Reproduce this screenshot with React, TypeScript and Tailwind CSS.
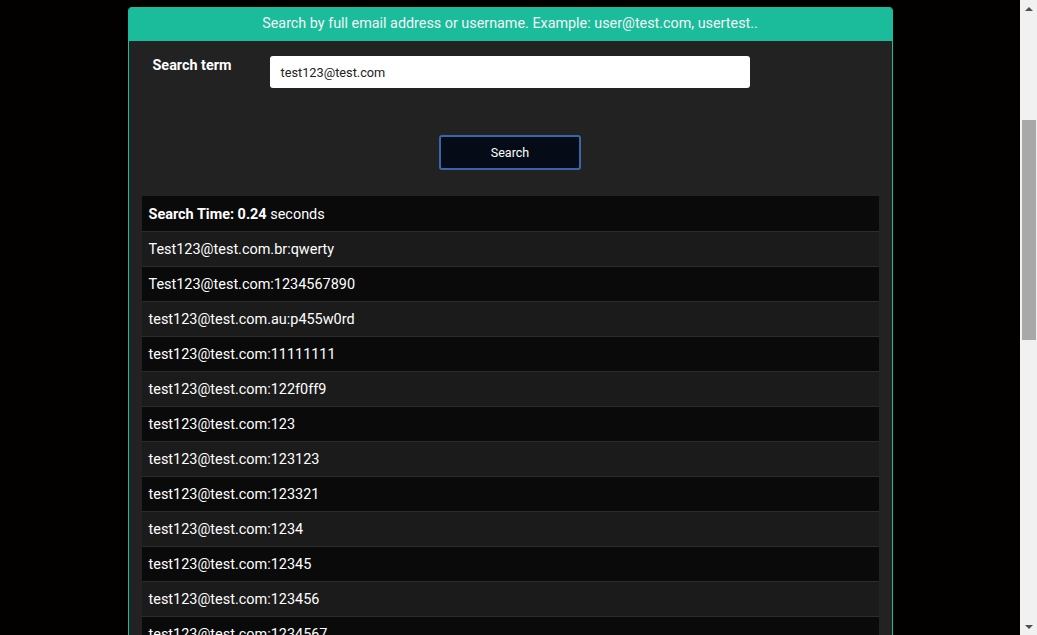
const rows = [
  'Test123@test.com.br:qwerty',
  'Test123@test.com:1234567890',
  'test123@test.com.au:p455w0rd',
  'test123@test.com:11111111',
  'test123@test.com:122f0ff9',
  'test123@test.com:123',
  'test123@test.com:123123',
  'test123@test.com:123321',
  'test123@test.com:1234',
  'test123@test.com:12345',
  'test123@test.com:123456',
  'test123@test.com:1234567',
  'test123@test.com:12345678',
]

function Scrollbar() {
  return (
    <div className="w-[17px] h-full bg-[#f1f1f1] flex flex-col items-center flex-shrink-0">
      <div className="h-[17px] w-full flex items-center justify-center">
        <div className="w-0 h-0 border-x-[4px] border-x-transparent border-b-[4px] border-b-[#505050]" />
      </div>
      <div className="h-[103px]" />
      <div className="w-[14px] h-[220px] bg-[#a8a8a8] ml-[1px]" />
      <div className="flex-1" />
      <div className="h-[17px] w-full flex items-center justify-center">
        <div className="w-0 h-0 border-x-[4px] border-x-transparent border-t-[4px] border-t-[#505050]" />
      </div>
    </div>
  )
}

export default function App() {
  return (
    <div className="h-[635px] w-full flex overflow-hidden bg-[#030000] font-['Roboto',sans-serif]">
      <div className="flex-1 pt-[7px] overflow-hidden">
        <div className="w-[765px] mx-auto rounded-t-[4px] overflow-hidden border-x border-[#1abc9c] bg-[#222222]">
          <div className="h-[34px] -mx-px bg-[#1abc9c] flex items-center justify-center text-[14.35px] text-[#f4f4f4]">
            Search by full email address or username. Example: user@test.com, usertest..
          </div>

          <div className="flex items-start pt-[15px] pl-[24px]">
            <label className="w-[117px] text-[14.4px] font-bold text-white leading-5">Search term</label>
            <div className="w-[480px] h-[32px] bg-white rounded-[3px] flex items-center pl-[11px] pt-[1px] text-[12.75px] text-[#222]">
              test123@test.com
            </div>
          </div>

          <div className="flex justify-center pt-[47px]">
            <button className="w-[142px] h-[35px] bg-[#050c18] border-2 border-[#3866a8] rounded-[3px] pt-[1px] text-[12.5px] text-white">
              Search
            </button>
          </div>

          <div className="mx-[13px] mt-[26px] text-[14.45px] text-white">
            <div className="h-[35px] flex items-center pl-[7px] bg-[#0a0a0a] pt-[2px]">
              <span className="font-bold">Search Time: 0.24</span>
              <span>&nbsp;seconds</span>
            </div>
            {rows.map((r, i) => (
              <div
                key={i}
                className={`h-[35px] flex items-center pl-[7px] pt-[1px] border-t border-[#2c2c2c] ${i % 2 === 0 ? 'bg-[#1b1b1b]' : 'bg-[#0a0a0a]'}`}
              >
                {r}
              </div>
            ))}
          </div>
        </div>
      </div>
      <Scrollbar />
    </div>
  )
}
